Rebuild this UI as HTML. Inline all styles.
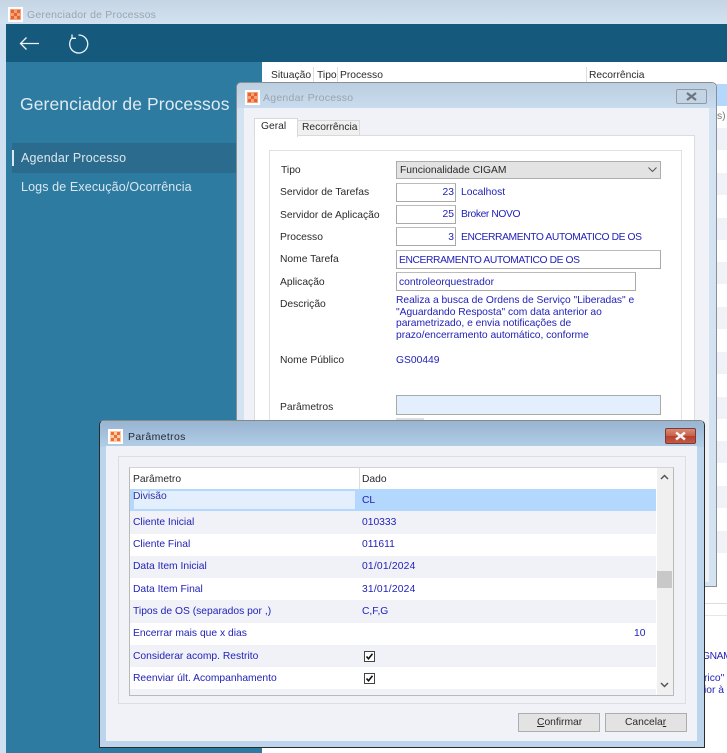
<!DOCTYPE html>
<html lang="pt"><head><meta charset="utf-8"><title>Gerenciador de Processos</title>
<style>
html,body{margin:0;padding:0;width:727px;height:753px;overflow:hidden;background:#fff}
#r{position:relative;width:727px;height:753px;overflow:hidden;font:10.3px "Liberation Sans",sans-serif;color:#2a2a2a;filter:blur(.35px)}
#r div,#r span.t{position:absolute;box-sizing:border-box;white-space:nowrap}
.t{line-height:14px}
.b{color:#2222b8}
.u{letter-spacing:-.4px}
.inp{background:#fff;border:1px solid #a9a9a9;border-top-color:#bbb;height:19px}
.ico{width:15px;height:15px;background:#fff}
.ico svg{position:absolute;left:2px;top:2px}
</style></head><body><div id="r">

<!-- main window -->
<div style="left:0;top:0;width:727px;height:753px;background:#cfe0f0"></div>
<div style="left:0;top:0;width:727px;height:24px;background:linear-gradient(#c6d5e4,#d3e2f1)"></div>
<div class="ico" style="left:8px;top:7px"><svg width="11" height="11"><rect width="11" height="11" fill="#f3a27a"/><path d="M1 1h3v3H1zM7 1h3v3H7zM4 4h3v3H4zM1 7h3v3H1zM7 7h3v3H7z" fill="#e8622c"/></svg></div>
<span class="t" style="position:absolute;left:27px;top:8px;color:#9aa4ae;font-size:10.5px;letter-spacing:.2px">Gerenciador de Processos</span>
<div style="left:6px;top:24px;width:721px;height:38px;background:#155a7d"></div>
<div style="left:6px;top:62px;width:256px;height:691px;background:#2e7ba2"></div>
<div style="left:262px;top:62px;width:465px;height:691px;background:#fff"></div>
<svg style="position:absolute;left:18px;top:32px" width="72" height="22" fill="none" stroke="#eef4f8" stroke-width="1.3"><path d="M2.500 11.500H21M8.500 5.500l-6 6 6 6"/><path d="M54 6A9 9 0 1 0 60.500 3"/><path d="M54 2.500V6.300H58" stroke-width="1.300"/></svg>
<span class="t" style="position:absolute;left:20px;top:94px;color:#dfeaf1;font-size:17.5px;line-height:20px;letter-spacing:.1px">Gerenciador de Processos</span>
<div style="left:12px;top:143px;width:224px;height:30px;background:#2b6b8d"></div>
<div style="left:12px;top:150px;width:2px;height:16px;background:#dce8ef"></div>
<span class="t" style="position:absolute;left:21px;top:151px;color:#dbe7ee;font-size:12.5px;letter-spacing:.15px">Agendar Processo</span>
<span class="t" style="position:absolute;left:21px;top:180px;color:#dbe7ee;font-size:12.5px;letter-spacing:.12px">Logs de Execução/Ocorrência</span>

<!-- background table -->
<span class="t" style="position:absolute;left:271px;top:69px">Situação</span>
<span class="t" style="position:absolute;left:317px;top:69px">Tipo</span>
<span class="t" style="position:absolute;left:340px;top:69px">Processo</span>
<span class="t" style="position:absolute;left:589px;top:69px">Recorrência</span>
<div style="left:313px;top:67px;width:1px;height:16px;background:#ddd"></div>
<div style="left:337px;top:67px;width:1px;height:16px;background:#ddd"></div>
<div style="left:586px;top:67px;width:1px;height:16px;background:#ddd"></div>
<div style="left:716px;top:84px;width:11px;height:22px;background:#b3d7fd"></div>
<div style="left:716px;top:128px;width:11px;height:22px;background:#f1f2f8"></div>
<div style="left:716px;top:173px;width:11px;height:22px;background:#f1f2f8"></div>
<div style="left:716px;top:218px;width:11px;height:22px;background:#f1f2f8"></div>
<div style="left:716px;top:262px;width:11px;height:22px;background:#f1f2f8"></div>
<div style="left:716px;top:307px;width:11px;height:22px;background:#f1f2f8"></div>
<div style="left:716px;top:352px;width:11px;height:22px;background:#f1f2f8"></div>
<div style="left:716px;top:397px;width:11px;height:22px;background:#f1f2f8"></div>
<div style="left:716px;top:441px;width:11px;height:22px;background:#f1f2f8"></div>
<div style="left:716px;top:486px;width:11px;height:22px;background:#f1f2f8"></div>
<div style="left:716px;top:531px;width:11px;height:22px;background:#f1f2f8"></div>
<span class="t" style="position:absolute;left:717px;top:110px;color:#777">s)</span>
<div style="left:262px;top:603px;width:465px;height:1px;background:#ddd"></div>
<div style="left:262px;top:615px;width:465px;height:1px;background:#e6e6e6"></div>
<span class="t u" style="position:absolute;left:702px;top:650px;color:#2222b8">GNAM</span>
<span class="t" style="position:absolute;left:704px;top:672px;color:#2222b8">rico" e</span>
<span class="t" style="position:absolute;left:704px;top:684px;color:#2222b8">ior à</span>

<!-- Agendar dialog -->
<div style="left:236px;top:82px;width:481px;height:505px;background:#d3e3f2;border:1px solid #8b8f93;border-radius:5px 5px 0 0"></div>
<div style="left:237px;top:83px;width:479px;height:25px;background:linear-gradient(#bccfe0,#c9dcee);border-radius:5px 5px 0 0"></div>
<div style="left:244px;top:108px;width:465px;height:474px;background:#f0f2f8"></div>
<div class="ico" style="left:245px;top:90px"><svg width="11" height="11"><rect width="11" height="11" fill="#f3a27a"/><path d="M1 1h3v3H1zM7 1h3v3H7zM4 4h3v3H4zM1 7h3v3H1zM7 7h3v3H7z" fill="#e8622c"/></svg></div>
<span class="t" style="position:absolute;left:263px;top:91px;color:#9aa4ae;font-size:10.5px;letter-spacing:.25px">Agendar Processo</span>
<div style="left:676px;top:89px;width:31px;height:15px;border:1px solid #8f9aa6;border-radius:2px;background:#c3d4e4"></div>
<svg style="position:absolute;left:685px;top:92px" width="13" height="9"><path d="M2 1l9 7M11 1L2 8" stroke="#6d7680" stroke-width="2.200"/></svg>
<div style="left:254px;top:135px;width:441px;height:450px;background:#fff;border:1px solid #dcdcdc"></div>
<div style="left:297px;top:120px;width:63px;height:16px;background:#f0f0f0;border:1px solid #d9d9d9"></div>
<span class="t" style="position:absolute;left:302px;top:121px">Recorrência</span>
<div style="left:254px;top:118px;width:44px;height:19px;background:#fff;border:1px solid #d9d9d9;border-bottom:0"></div>
<span class="t" style="position:absolute;left:261px;top:120px">Geral</span>
<div style="left:269px;top:150px;width:413px;height:440px;background:#fff;border:1px solid #e0e0e0"></div>

<span class="t" style="position:absolute;left:281px;top:164px">Tipo</span>
<span class="t" style="position:absolute;left:280px;top:186px">Servidor de Tarefas</span>
<span class="t" style="position:absolute;left:280px;top:209px">Servidor de Aplicação</span>
<span class="t" style="position:absolute;left:280px;top:231px">Processo</span>
<span class="t" style="position:absolute;left:280px;top:253px">Nome Tarefa</span>
<span class="t" style="position:absolute;left:280px;top:276px">Aplicação</span>
<span class="t" style="position:absolute;left:280px;top:298px">Descrição</span>
<span class="t" style="position:absolute;left:280px;top:354px">Nome Público</span>
<span class="t" style="position:absolute;left:280px;top:401px">Parâmetros</span>

<div style="left:396px;top:161px;width:265px;height:18px;background:#e3e3e3;border:1px solid #adadad"></div>
<span class="t" style="position:absolute;left:400px;top:164px">Funcionalidade CIGAM</span>
<svg style="position:absolute;left:648px;top:167px" width="9" height="6" fill="none" stroke="#555"><path d="M.5 .5L4.500 4.500 8.500 .5"/></svg>
<div class="inp" style="left:396px;top:183px;width:60px"></div>
<span class="t b" style="position:absolute;right:273px;top:186px">23</span>
<span class="t b" style="position:absolute;left:461px;top:186px">Localhost</span>
<div class="inp" style="left:396px;top:205px;width:60px"></div>
<span class="t b" style="position:absolute;right:273px;top:208px">25</span>
<span class="t b u" style="position:absolute;left:461px;top:208px">Broker NOVO</span>
<div class="inp" style="left:396px;top:227px;width:60px"></div>
<span class="t b" style="position:absolute;right:273px;top:231px">3</span>
<span class="t b u" style="position:absolute;left:461px;top:231px">ENCERRAMENTO AUTOMATICO DE OS</span>
<div class="inp" style="left:396px;top:250px;width:265px"></div>
<span class="t b u" style="position:absolute;left:399px;top:254px">ENCERRAMENTO AUTOMATICO DE OS</span>
<div class="inp" style="left:396px;top:272px;width:240px"></div>
<span class="t b" style="position:absolute;left:399px;top:276px">controleorquestrador</span>
<span class="t b" style="position:absolute;left:396px;top:295px;line-height:11.6px;letter-spacing:-.03px">Realiza a busca de Ordens de Serviço "Liberadas" e<br>"Aguardando Resposta" com data anterior ao<br>parametrizado, e envia notificações de<br>prazo/encerramento automático, conforme</span>
<span class="t b" style="position:absolute;left:396px;top:354px">GS00449</span>
<div style="left:396px;top:395px;width:265px;height:20px;background:#e3effd;border:1px solid #a9a9a9"></div>
<div style="left:396px;top:418px;width:28px;height:4px;background:#ddd"></div>

<!-- Parametros dialog -->
<div style="left:99px;top:420px;width:606px;height:328px;background:#bdd5ec;border:1px solid #2b2b2b;border-top-color:#888;border-radius:5px 5px 0 0"></div>
<div style="left:100px;top:421px;width:604px;height:26px;background:linear-gradient(#97b4d1,#b3cde6);border-radius:5px 5px 0 0"></div>
<div style="left:106px;top:446px;width:591px;height:295px;background:#f0f2f8"></div>
<div class="ico" style="left:108px;top:429px"><svg width="11" height="11"><rect width="11" height="11" fill="#f9c9a8"/><path d="M1 1h3v3H1zM7 1h3v3H7zM4 4h3v3H4zM1 7h3v3H1zM7 7h3v3H7z" fill="#ee6e32"/></svg></div>
<span class="t" style="position:absolute;left:128px;top:430px;color:#222c36;font-size:10.5px;letter-spacing:.35px">Parâmetros</span>
<div style="left:665px;top:428px;width:31px;height:16px;border:1px solid #7d3a30;border-radius:2px;background:linear-gradient(#d88a78 0,#c9604a 50%,#b8402b 51%,#c25a48 100%)"></div>
<svg style="position:absolute;left:674px;top:431px" width="13" height="10"><path d="M2 1.500l9 7M11 1.500L2 8.500" stroke="#f4f4f4" stroke-width="2.400"/></svg>
<div style="left:118px;top:456px;width:568px;height:248px;border:1px solid #dcdee2"></div>
<div style="left:129px;top:467px;width:545px;height:229px;background:#fff;border:1px solid #b9b9b9;border-top-color:#d4d4d4"></div>
<div style="left:359px;top:468px;width:1px;height:21px;background:#ddd"></div>
<span class="t" style="position:absolute;left:133px;top:473px">Parâmetro</span>
<span class="t" style="position:absolute;left:362px;top:473px">Dado</span>

<div style="left:130px;top:489px;width:526px;height:22px;background:#b3d7fd"></div>
<div style="left:132px;top:490px;width:225px;height:21px;background:#e3effd;border:2px solid #b3d7fd;border-top-width:1px"></div>
<div style="left:130px;top:511px;width:526px;height:23px;background:#f0f2f8"></div>
<div style="left:130px;top:556px;width:526px;height:22px;background:#f0f2f8"></div>
<div style="left:130px;top:600px;width:526px;height:23px;background:#f0f2f8"></div>
<div style="left:130px;top:645px;width:526px;height:22px;background:#f0f2f8"></div>
<div style="left:130px;top:689px;width:526px;height:6px;background:#f0f2f8"></div>

<span class="t b" style="position:absolute;left:133px;top:490px;color:#3030a8">Divisão</span>
<span class="t b" style="position:absolute;left:362px;top:494px">CL</span>
<span class="t b" style="position:absolute;left:133px;top:516px">Cliente Inicial</span>
<span class="t b" style="position:absolute;left:362px;top:516px">010333</span>
<span class="t b" style="position:absolute;left:133px;top:538px">Cliente Final</span>
<span class="t b" style="position:absolute;left:362px;top:538px">011611</span>
<span class="t b" style="position:absolute;left:133px;top:560px">Data Item Inicial</span>
<span class="t b" style="position:absolute;left:362px;top:560px;letter-spacing:.2px">01/01/2024</span>
<span class="t b" style="position:absolute;left:133px;top:583px">Data Item Final</span>
<span class="t b" style="position:absolute;left:362px;top:583px;letter-spacing:.2px">31/01/2024</span>
<span class="t b" style="position:absolute;left:133px;top:605px">Tipos de OS (separados por ,)</span>
<span class="t b" style="position:absolute;left:362px;top:605px">C,F,G</span>
<span class="t b" style="position:absolute;left:133px;top:627px">Encerrar mais que x dias</span>
<span class="t b" style="position:absolute;left:634px;top:627px">10</span>
<span class="t b" style="position:absolute;left:133px;top:650px">Considerar acomp. Restrito</span>
<span class="t b" style="position:absolute;left:133px;top:672px">Reenviar últ. Acompanhamento</span>
<svg style="position:absolute;left:364px;top:651px" width="11" height="11"><rect x=".5" y=".5" width="10" height="10" fill="#fff" stroke="#444"/><path d="M2.500 5.500l2 2.300 4-5" fill="none" stroke="#111" stroke-width="1.600"/></svg>
<svg style="position:absolute;left:364px;top:673px" width="11" height="11"><rect x=".5" y=".5" width="10" height="10" fill="#fff" stroke="#444"/><path d="M2.500 5.500l2 2.300 4-5" fill="none" stroke="#111" stroke-width="1.600"/></svg>

<div style="left:657px;top:468px;width:16px;height:227px;background:#f0f0f0"></div>
<div style="left:657px;top:571px;width:15px;height:17px;background:#c8c8c8"></div>
<svg style="position:absolute;left:660px;top:474px" width="9" height="6" fill="none" stroke="#555" stroke-width="1.500"><path d="M1 5L4.500 1.500 8 5"/></svg>
<svg style="position:absolute;left:660px;top:682px" width="9" height="6" fill="none" stroke="#555" stroke-width="1.500"><path d="M1 1l3.500 3.500L8 1"/></svg>

<div style="left:518px;top:713px;width:82px;height:19px;background:#e3e3e3;border:1px solid #adadad"></div>
<span class="t" style="position:absolute;left:537px;top:716px"><u>C</u>onfirmar</span>
<div style="left:605px;top:713px;width:82px;height:19px;background:#e3e3e3;border:1px solid #adadad"></div>
<span class="t" style="position:absolute;left:625px;top:716px">Cancela<u>r</u></span>
</div></body></html>
